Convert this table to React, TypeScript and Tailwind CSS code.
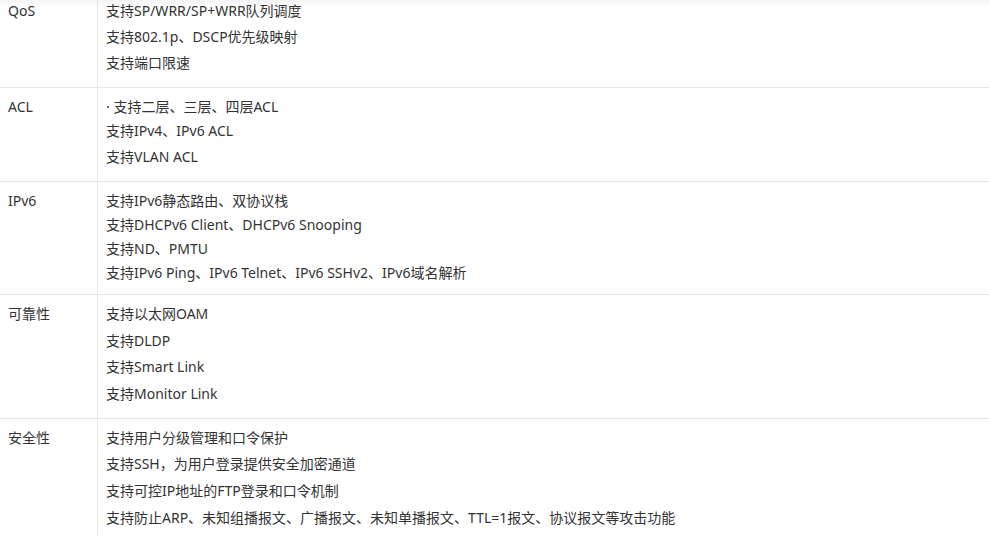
const gap: Record<number, string> = {
  0: "mt-0",
  2: "mt-[2px]",
  3: "mt-[3px]",
};

type Row = {
  label: string;
  lines: string[];
  gaps: number[];
  pb: string;
};

const rows: Row[] = [
  {
    label: "QoS",
    lines: ["支持SP/WRR/SP+WRR队列调度", "支持802.1p、DSCP优先级映射", "支持端口限速"],
    gaps: [0, 2, 2],
    pb: "pb-[12px]",
  },
  {
    label: "ACL",
    lines: ["· 支持二层、三层、四层ACL", "支持IPv4、IPv6 ACL", "支持VLAN ACL"],
    gaps: [0, 0, 2],
    pb: "pb-[12px]",
  },
  {
    label: "IPv6",
    lines: [
      "支持IPv6静态路由、双协议栈",
      "支持DHCPv6 Client、DHCPv6 Snooping",
      "支持ND、PMTU",
      "支持IPv6 Ping、IPv6 Telnet、IPv6 SSHv2、IPv6域名解析",
    ],
    gaps: [0, 0, 0, 0],
    pb: "pb-[9px]",
  },
  {
    label: "可靠性",
    lines: ["支持以太网OAM", "支持DLDP", "支持Smart Link", "支持Monitor Link"],
    gaps: [0, 3, 2, 3],
    pb: "pb-[12px]",
  },
  {
    label: "安全性",
    lines: [
      "支持用户分级管理和口令保护",
      "支持SSH，为用户登录提供安全加密通道",
      "支持可控IP地址的FTP登录和口令机制",
      "支持防止ARP、未知组播报文、广播报文、未知单播报文、TTL=1报文、协议报文等攻击功能",
    ],
    gaps: [0, 2, 3, 3],
    pb: "pb-[12px]",
  },
];

export default function App() {
  return (
    <div className="relative h-[536px] w-[989px] overflow-hidden bg-white font-['Noto_Sans','Noto_Sans_CJK_SC',sans-serif] text-[14px] text-[#333]">
      <div className="pointer-events-none absolute top-0 left-0 z-10 h-[8px] w-full bg-gradient-to-b from-black/[0.045] to-transparent" />
      <div className="-mt-[9px] border-t border-[#e6e6e6]">
        {rows.map((row) => (
          <div key={row.label} className="flex border-b border-[#e6e6e6]">
            <div className={`w-[98px] shrink-0 border-r border-[#e6e6e6] pt-[7px] pl-[8px] leading-[24px] ${row.pb}`}>
              {row.label}
            </div>
            <div className={`flex-1 pt-[7px] pl-[8px] ${row.pb}`}>
              {row.lines.map((line, i) => (
                <div key={i} className={`leading-[24px] whitespace-nowrap ${gap[row.gaps[i]]}`}>
                  {line}
                </div>
              ))}
            </div>
          </div>
        ))}
      </div>
    </div>
  );
}
